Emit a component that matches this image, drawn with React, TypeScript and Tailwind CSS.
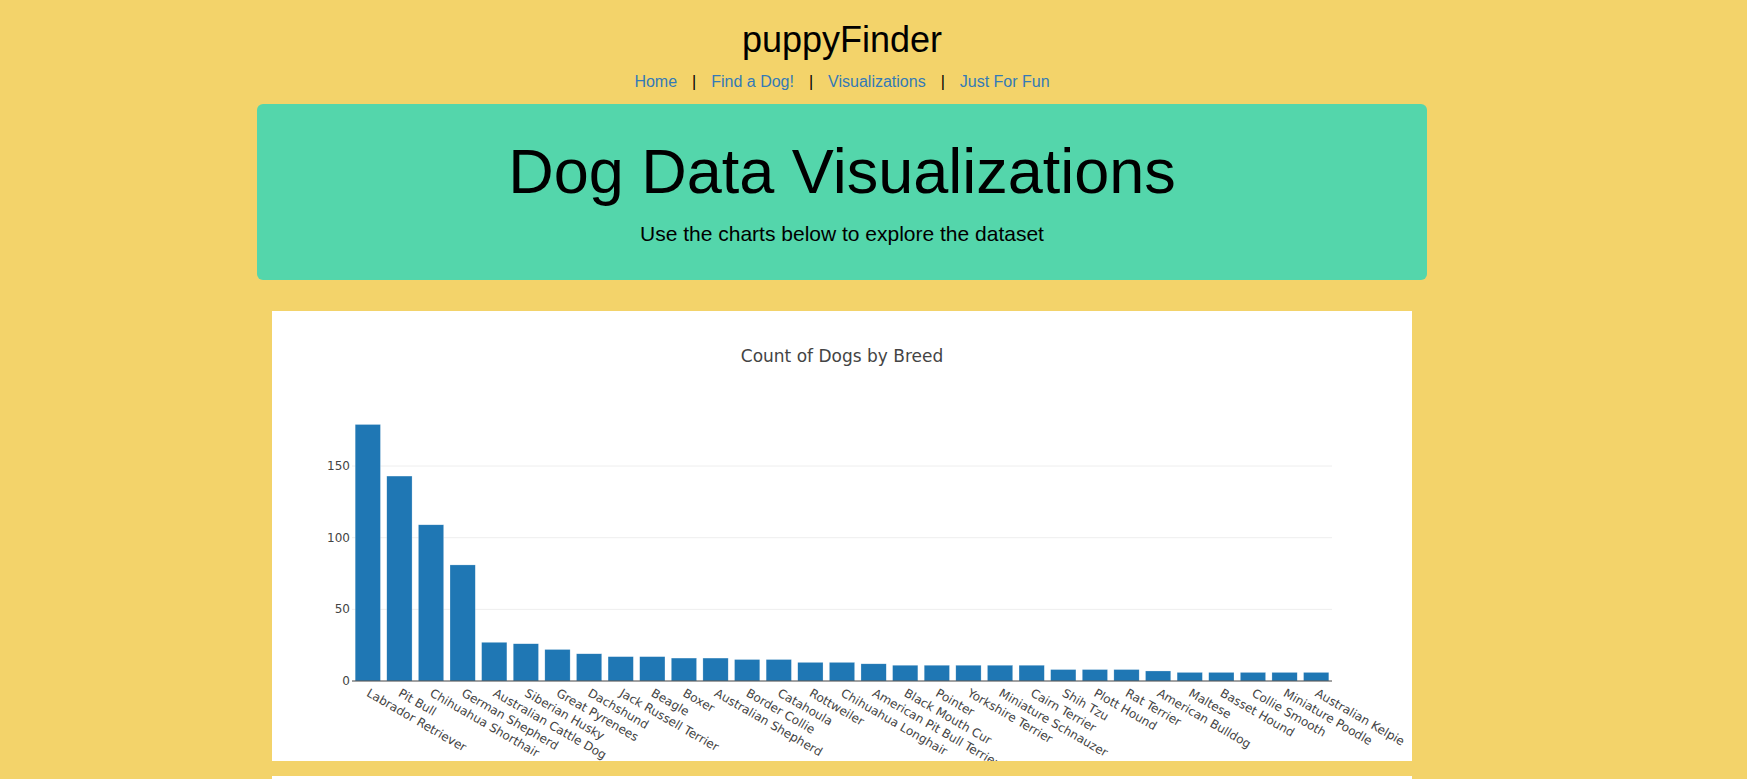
const breeds: [string, number][] = [
    ['Labrador Retriever', 179],
    ['Pit Bull', 143],
    ['Chihuahua Shorthair', 109],
    ['German Shepherd', 81],
    ['Australian Cattle Dog', 27],
    ['Siberian Husky', 26],
    ['Great Pyrenees', 22],
    ['Dachshund', 19],
    ['Jack Russell Terrier', 17],
    ['Beagle', 17],
    ['Boxer', 16],
    ['Australian Shepherd', 16],
    ['Border Collie', 15],
    ['Catahoula', 15],
    ['Rottweiler', 13],
    ['Chihuahua Longhair', 13],
    ['American Pit Bull Terrier', 12],
    ['Black Mouth Cur', 11],
    ['Pointer', 11],
    ['Yorkshire Terrier', 11],
    ['Miniature Schnauzer', 11],
    ['Cairn Terrier', 11],
    ['Shih Tzu', 8],
    ['Plott Hound', 8],
    ['Rat Terrier', 8],
    ['American Bulldog', 7],
    ['Maltese', 6],
    ['Basset Hound', 6],
    ['Collie Smooth', 6],
    ['Miniature Poodle', 6],
    ['Australian Kelpie', 6],
];

// plot area inside the 1140x450 chart (plotly default margins)
const L = 80;
const T = 100;
const W = 980;
const H = 270;
const yMax = 188.4;

const BreedChart = () => {
    const step = W / breeds.length;
    const barW = step * 0.8;
    const y = (v: number) => T + H - (v / yMax) * H;

    return (
        <svg width={1140} height={450} className="block" style={{ fontFamily: '"DejaVu Sans", Verdana, sans-serif' }}>
            <text x={570} y={51} textAnchor="middle" fontSize={17} fill="#444">
                Count of Dogs by Breed
            </text>

            {/* grid + y ticks */}
            {[50, 100, 150].map((v) => (
                <line key={v} x1={L} x2={L + W} y1={y(v)} y2={y(v)} stroke="#eee" strokeWidth={1} />
            ))}
            {[0, 50, 100, 150].map((v) => (
                <text key={v} x={L - 2} y={y(v) + 4} textAnchor="end" fontSize={12} fill="#444">
                    {v}
                </text>
            ))}

            {breeds.map(([name, count], i) => (
                <rect
                    key={name}
                    x={L + i * step + (step - barW) / 2}
                    y={y(count)}
                    width={barW}
                    height={(count / yMax) * H}
                    fill="#1f77b4"
                    stroke="rgba(255,255,255,0.5)"
                    strokeWidth={0.5}
                />
            ))}

            <line x1={L} x2={L + W} y1={T + H} y2={T + H} stroke="#444" strokeWidth={1} />

            {/* rotated category labels */}
            {breeds.map(([name], i) => {
                const ax = L + i * step + step / 2 - 2;
                const ay = T + H + 14.5;
                return (
                    <text key={name} x={ax} y={ay} fontSize={12} fill="#444" transform={`rotate(30 ${ax} ${ay})`}>
                        {name}
                    </text>
                );
            })}
        </svg>
    );
};

export default function App() {
    return (
        <div className="min-h-screen bg-[#f3d36a] font-['Liberation_Sans',Arial,sans-serif] text-black">
            <div className="ml-[257px] w-[1170px] pt-[20px]">
                <header className="text-center">
                    <h1 className="text-[36px] leading-[40px]">puppyFinder</h1>
                    <nav className="mt-[10px] flex justify-center gap-[15px] text-[16px] leading-[23px]">
                        <a href="#" className="text-[#337ab7]">Home</a>
                        <span>|</span>
                        <a href="#" className="text-[#337ab7]">Find a Dog!</a>
                        <span>|</span>
                        <a href="#" className="text-[#337ab7]">Visualizations</a>
                        <span>|</span>
                        <a href="#" className="text-[#337ab7]">Just For Fun</a>
                    </nav>
                </header>

                <section className="mt-[11px] h-[176px] rounded-[6px] bg-[#54d6ab] pt-[33px] text-center">
                    <h2 className="text-[63px] leading-[69px]">Dog Data Visualizations</h2>
                    <p className="mt-[13px] text-[21px] leading-[30px]">Use the charts below to explore the dataset</p>
                </section>

                <div className="mx-[15px] mt-[31px] space-y-[15px]">
                    <div className="h-[450px] overflow-hidden bg-white">
                        <BreedChart />
                    </div>
                    <div className="h-[450px] bg-white" />
                </div>
            </div>
        </div>
    );
}
